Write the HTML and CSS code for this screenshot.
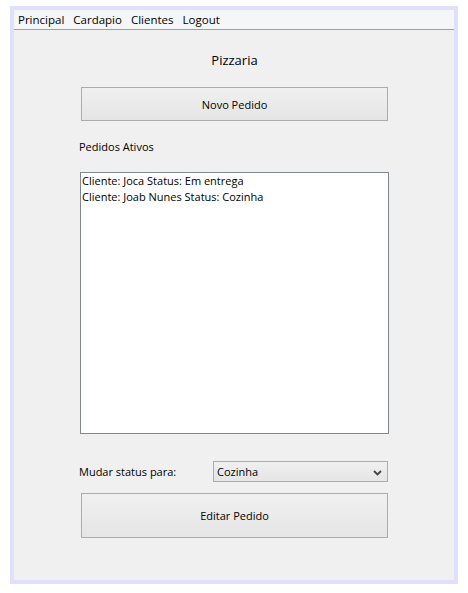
FILE: index.html
```html
<!DOCTYPE html>
<html>
<head>
<meta charset="utf-8">
<link rel="stylesheet" href="styles.css">
</head>
<body>
<div class="frame">
  <div class="panel">
    <div class="menubar">
      <span class="menu-item">Principal</span>
      <span class="menu-item">Cardapio</span>
      <span class="menu-item">Clientes</span>
      <span class="menu-item">Logout</span>
    </div>
    <div class="content">
      <div class="title">Pizzaria</div>
      <button class="btn btn-novo">Novo Pedido</button>
      <div class="label-ativos">Pedidos Ativos</div>
      <div class="list">
        <div class="list-item">Cliente: Joca Status: Em entrega</div>
        <div class="list-item">Cliente: Joab Nunes Status: Cozinha</div>
      </div>
      <div class="status-row">
        <span class="status-label">Mudar status para:</span>
        <div class="combo">
          <span class="combo-text">Cozinha</span>
          <svg class="chevron" width="9" height="6" viewBox="0 0 9 6"><path d="M1 1 L4.5 4.5 L8 1" fill="none" stroke="#444" stroke-width="1.8"/></svg>
        </div>
      </div>
      <button class="btn btn-editar">Editar Pedido</button>
    </div>
  </div>
</div>
</body>
</html>
```
FILE: styles.css
```css
html, body {
  margin: 0;
  padding: 0;
  background: #ffffff;
}
body {
  font-family: "Open Sans", "Noto Sans", sans-serif;
  font-size: 11px;
  color: #000;
}
.frame {
  margin: 6px 0 0 10px;
  width: 440px;
  height: 570px;
  border: 4px solid #e0e0fc;
  background: #f0f0f0;
}
.panel {
  height: 100%;
  display: flex;
  flex-direction: column;
}
.menubar {
  height: 19px;
  background: #f5f6f7;
  border-bottom: 1px solid #a0a0a0;
  display: flex;
  align-items: center;
  gap: 9px;
  padding-left: 4px;
  line-height: 19px;
  font-size: 11.5px;
}
.content {
  display: flex;
  flex-direction: column;
  padding-left: 66px;
  width: 309px;
}
.title {
  margin-top: 21px;
  height: 19px;
  line-height: 19px;
  font-size: 13px;
  text-align: center;
}
.btn {
  font-family: inherit;
  font-size: 11px;
  color: #000;
  margin-left: 1px;
  width: 307px;
  border: 1px solid #acacac;
  background: linear-gradient(#f0f0f0, #e5e5e5);
  padding: 0;
}
.btn-novo {
  margin-top: 17px;
  height: 34px;
}
.label-ativos {
  margin-top: 18px;
  height: 16px;
  line-height: 16px;
  margin-left: -1px;
}
.list {
  margin-top: 17px;
  height: 260px;
  width: 306px;
  background: #fff;
  border: 1px solid #828790;
  padding: 0 0 0 1px;
}
.list-item {
  height: 16px;
  line-height: 16px;
}
.status-row {
  margin-top: 27px;
  height: 21px;
  display: flex;
  align-items: center;
  margin-left: -1px;
}
.status-label {
  width: 134px;
}
.combo {
  width: 175px;
  height: 21px;
  border: 1px solid #acacac;
  background: linear-gradient(#f0f0f0, #e5e5e5);
  display: flex;
  align-items: center;
  justify-content: space-between;
  padding: 0 5px 0 3px;
  box-sizing: border-box;
}
.chevron {
  margin-top: 2px;
}
.btn-editar {
  margin-top: 11px;
  height: 45px;
}
```
